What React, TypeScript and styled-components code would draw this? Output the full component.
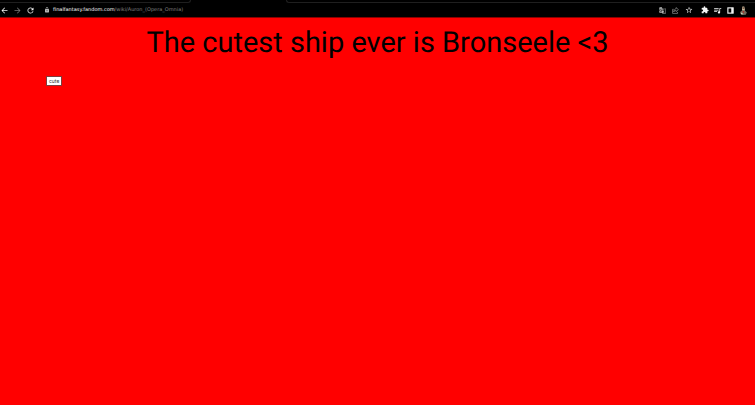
import React from "react";
import styled, { createGlobalStyle } from "styled-components";
import {
  MdArrowBack,
  MdArrowForward,
  MdExtension,
  MdGTranslate,
  MdLock,
  MdQueueMusic,
  MdRefresh,
  MdStarBorder,
} from "react-icons/md";

const GlobalStyle = createGlobalStyle`
  * { box-sizing: border-box; }
  body {
    margin: 0;
    background: #ff0000;
    font-family: Roboto, "Liberation Sans", sans-serif;
    text-rendering: geometricPrecision;
  }
`;

const Chrome = styled.header`
  background: #000;
  border-bottom: 1px solid #8c0000;
`;

const TabStrip = styled.div`
  display: grid;
  grid-template-columns: 191px 95px 1fr;
  height: 3px;
`;

const InactiveTabs = styled.div<{ $side: "left" | "right" }>`
  border-bottom: 1px solid #1f1f1f;
  ${({ $side }) =>
    $side === "left"
      ? "border-right: 1px solid #1f1f1f; border-bottom-right-radius: 3px;"
      : "grid-column: 3; border-left: 1px solid #1f1f1f; border-bottom-left-radius: 3px;"}
`;

const Toolbar = styled.nav`
  display: flex;
  align-items: center;
  height: 14px;
  padding: 0 7px 0 0;
`;

const IconGroup = styled.div<{ $gap: number }>`
  display: flex;
  align-items: center;
  gap: ${({ $gap }) => $gap}px;
`;

const IconButton = styled.button<{ $color?: string; $size?: number }>`
  display: flex;
  align-items: center;
  justify-content: center;
  width: 9px;
  height: 10px;
  padding: 0;
  border: 0;
  background: none;
  color: ${({ $color }) => $color ?? "#f4f4f4"};

  svg {
    flex: none;
    width: ${({ $size }) => $size ?? 9}px;
    height: ${({ $size }) => $size ?? 9}px;
  }
`;

const AddressBar = styled.div`
  display: flex;
  flex: 1;
  align-items: center;
  gap: 3px;
  min-width: 0;
  padding-left: 9px;
  color: #b5b5b5;

  svg {
    flex: none;
    width: 6px;
    height: 6px;
  }
`;

const Address = styled.a`
  color: #808080;
  font-family: "DejaVu Sans", sans-serif;
  font-size: 5px;
  line-height: 10px;
  text-decoration: none;
  white-space: nowrap;
`;

const Host = styled.span`
  color: #fff;
`;

const Actions = styled.div`
  display: flex;
  align-items: center;
  gap: 7px;
`;

const Page = styled.main`
  padding: 7px 46px;
`;

const Title = styled.h1`
  margin: 0;
  color: #000;
  font-family: Roboto, sans-serif;
  font-size: 29px;
  font-weight: 400;
  line-height: 36px;
  text-align: center;
`;

const CuteButton = styled.button`
  display: block;
  height: 10px;
  margin-top: 15px;
  padding: 0 2px;
  border: 1px solid #803c3c;
  background: #fff;
  color: #333;
  font-family: Inter, "Liberation Sans", sans-serif;
  font-size: 5px;
  line-height: 8px;
`;

const ShareIcon = () => (
  <svg viewBox="0 0 24 24" fill="none" stroke="currentColor" strokeWidth="2" aria-hidden="true">
    <path d="M6 8H2v14h17v-5M14 2l8 7-8 7v-4c-4 0-7 1-8 5 0-6 3-10 8-11z" />
  </svg>
);

const SidePanelIcon = () => (
  <svg viewBox="0 0 24 24" aria-hidden="true">
    <rect x="5" y="5" width="14" height="14" fill="none" stroke="currentColor" strokeWidth="3" />
    <path d="M14 5h5v14h-5z" fill="currentColor" />
  </svg>
);

const AvatarIcon = () => (
  <svg viewBox="0 0 24 24" aria-hidden="true">
    <path d="M9 1h5l2 10-2 3H9L8 9z" fill="#c8b89c" />
    <path d="M10 3h3v5h-3z" fill="#75513d" />
    <path d="M3 16l6-5h6l6 6-3 6-7 1-6-2z" fill="#71695b" />
    <path d="M9 14h5l-2 5z" fill="#b52b22" />
    <path d="M5 17l5 2-1 4-4-2z" fill="#d5cbb4" />
  </svg>
);

export default function App() {
  return (
    <>
      <GlobalStyle />
      <Chrome>
        <TabStrip>
          <InactiveTabs $side="left" />
          <InactiveTabs $side="right" />
        </TabStrip>
        <Toolbar aria-label="Browser toolbar">
          <IconGroup $gap={4}>
            <IconButton aria-label="Back"><MdArrowBack /></IconButton>
            <IconButton aria-label="Forward" $color="#777"><MdArrowForward /></IconButton>
            <IconButton aria-label="Reload"><MdRefresh /></IconButton>
          </IconGroup>
          <AddressBar>
            <MdLock aria-hidden="true" />
            <Address href="#">
              <Host>finalfantasy.fandom.com</Host>/wiki/Auron_(Opera_Omnia)
            </Address>
          </AddressBar>
          <Actions>
            <IconGroup $gap={4}>
              <IconButton aria-label="Translate" $color="#bbb" $size={7}><MdGTranslate /></IconButton>
              <IconButton aria-label="Share" $color="#aaa" $size={7}><ShareIcon /></IconButton>
              <IconButton aria-label="Bookmark" $color="#ddd" $size={8}><MdStarBorder /></IconButton>
            </IconGroup>
            <IconGroup $gap={4}>
              <IconButton aria-label="Extensions" $size={8}><MdExtension /></IconButton>
              <IconButton aria-label="Media"><MdQueueMusic /></IconButton>
              <IconButton aria-label="Side panel"><SidePanelIcon /></IconButton>
              <IconButton aria-label="Profile" $size={9}><AvatarIcon /></IconButton>
            </IconGroup>
          </Actions>
        </Toolbar>
      </Chrome>
      <Page>
        <Title>The cutest ship ever is Bronseele &lt;3</Title>
        <CuteButton>cute</CuteButton>
      </Page>
    </>
  );
}
